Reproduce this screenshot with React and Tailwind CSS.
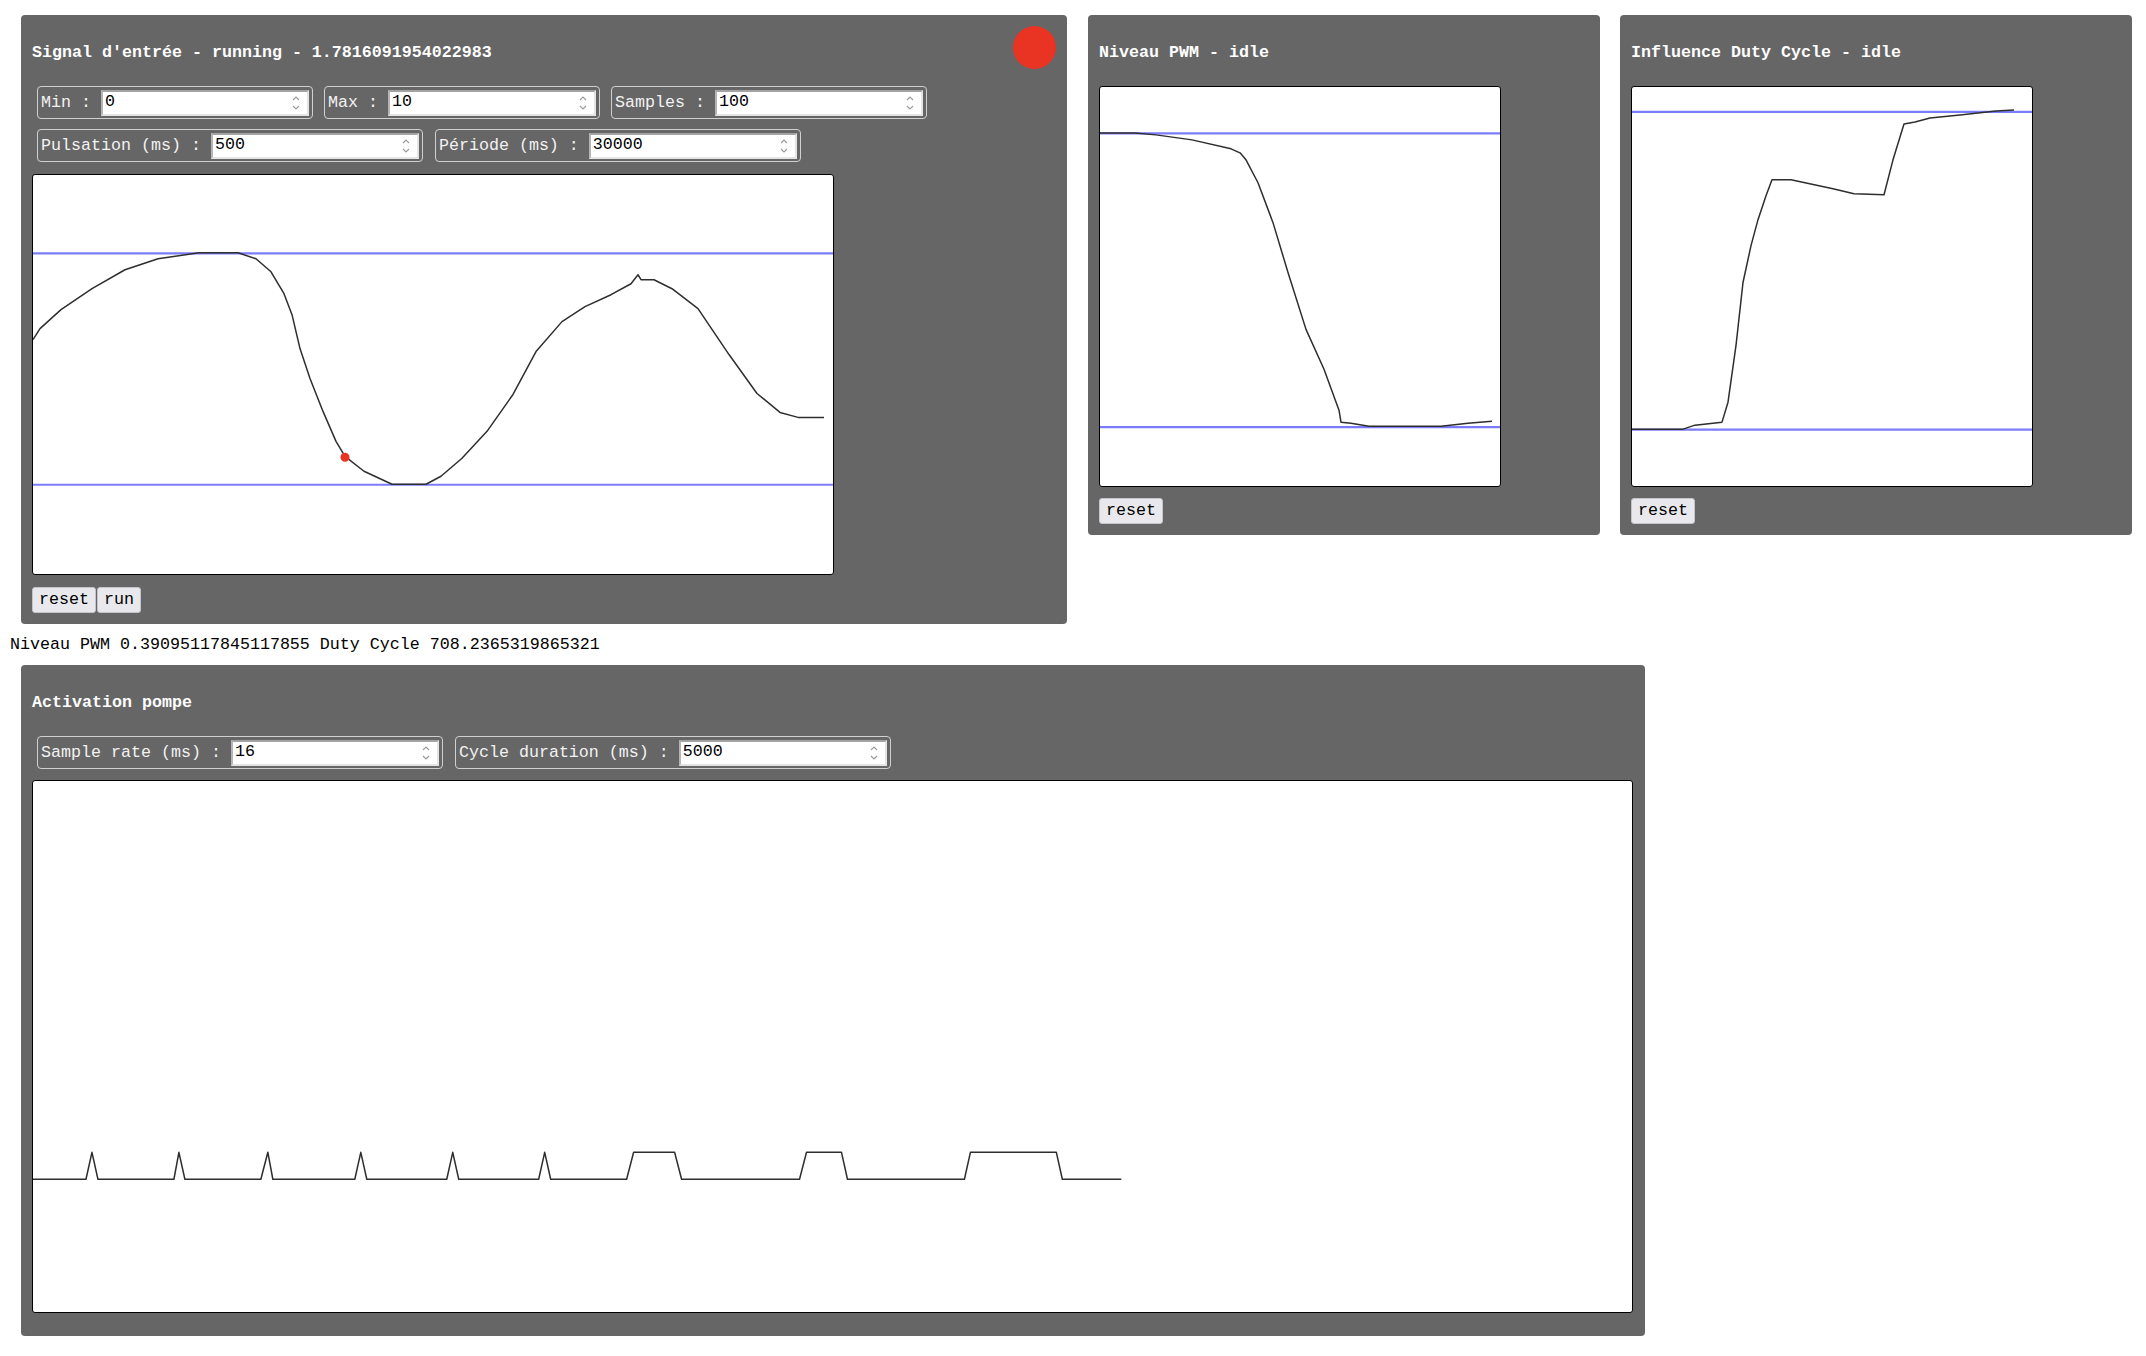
import React from 'react'

// points read off the reference canvases (interior pixel coords)
const signal = [
  [0, 165], [7, 154], [28, 135], [59, 114], [92, 95], [125, 84], [166, 78], [205, 78],
  [223, 84], [238, 97], [251, 119], [259, 140], [267, 174], [277, 204], [290, 237],
  [303, 267], [312, 282], [331, 297], [359, 310], [393, 310], [408, 302], [429, 284],
  [454, 257], [480, 220], [503, 177], [529, 147], [552, 132], [578, 120], [598, 109],
  [605, 100], [608, 105], [621, 105], [639, 114], [665, 134], [696, 180], [724, 219],
  [747, 238], [765, 243], [791, 243],
]

const pwm = [
  [0, 46], [35, 46], [56, 48], [92, 53], [131, 62], [140, 66], [146, 73], [158, 96],
  [173, 136], [188, 186], [206, 243], [224, 283], [239, 324], [241, 336], [251, 337],
  [269, 340], [341, 340], [368, 337], [392, 335],
]

const duty = [
  [0, 343], [51, 343], [63, 339], [90, 336], [96, 316], [104, 259], [111, 196],
  [119, 159], [126, 133], [134, 109], [140, 93], [159, 93], [201, 102], [222, 107],
  [252, 108], [261, 73], [272, 37], [283, 35], [298, 31], [328, 28], [364, 24], [382, 23],
]

const pulses = (() => {
  const base = 399
  const high = 372
  const pts = [[0, base]]
  const tri = [[53, 59, 65], [141, 146, 152], [228, 235, 240], [322, 328, 334], [414, 420, 426], [506, 512, 518]]
  tri.forEach(([a, p, b]) => { pts.push([a, base], [p, high], [b, base]) })
  const trap = [[594, 601, 642, 649], [767, 774, 809, 815], [932, 938, 1024, 1030]]
  trap.forEach(([a, b, c, d]) => { pts.push([a, base], [b, high], [c, high], [d, base]) })
  pts.push([1089, base])
  return pts
})()

const toPts = (arr) => arr.map(([x, y]) => `${x},${y}`).join(' ')

const Chart = ({ w, h, className, lines = [], data, dot }) => (
  <div className={`bg-white border border-black rounded-[3px] overflow-hidden ${className}`}>
    <svg viewBox={`0 0 ${w} ${h}`} preserveAspectRatio="none" className="block w-full h-full">
      {lines.map((y) => (
        <line key={y} x1="0" x2={w} y1={y} y2={y} stroke="#7c7cff" strokeWidth="2.2" />
      ))}
      <polyline points={toPts(data)} fill="none" stroke="#2e2e2e" strokeWidth="1.5" strokeLinejoin="round" />
      {dot && <circle cx={dot[0]} cy={dot[1]} r="4.5" fill="#e93424" />}
    </svg>
  </div>
)

const Spinner = () => (
  <svg width="10" height="18" viewBox="0 0 10 18" className="mr-[6px] shrink-0">
    <polyline points="2,6 5,3 8,6" fill="none" stroke="#9a9a9a" strokeWidth="1.1" />
    <polyline points="2,12 5,15 8,12" fill="none" stroke="#9a9a9a" strokeWidth="1.1" />
  </svg>
)

const Field = ({ label, value }) => (
  <label className="flex items-center h-[33px] border border-[#d0d0d0] rounded-[4px] pl-[3px] pr-[3px] text-[#f2f2f2]">
    <span className="whitespace-pre">{`${label} : `}</span>
    <div className="flex items-center w-[208px] h-[26px] bg-white border-2 border-t-[#a3a3a3] border-l-[#b5b5b5] border-r-[#e4e4e4] border-b-[#e4e4e4]">
      <span className="flex-1 pl-[2px] text-black leading-none">{value}</span>
      <Spinner />
    </div>
  </label>
)

const Btn = ({ children }) => (
  <button className="h-[26px] px-[6px] bg-[#e9e9ed] border border-[#c4c4ca] rounded-[3px] text-black leading-none">
    {children}
  </button>
)

const Panel = ({ title, circle, className = '', children }) => (
  <div className={`bg-[#666] rounded-[4px] p-[11px] ${className}`}>
    <div className="flex justify-between items-start h-[60px]">
      <span className="mt-[17px] leading-[20px] font-bold text-white whitespace-pre">{title}</span>
      {circle && <div className="w-[43px] h-[43px] rounded-full bg-[#e93424]" />}
    </div>
    {children}
  </div>
)

export default function App() {
  return (
    <div className="min-h-screen bg-white font-['Liberation_Mono',monospace] text-[16.67px] pt-[15px] pl-[10px]">
      <div className="flex items-start ml-[11px]">
        <Panel title="Signal d'entrée - running - 1.7816091954022983" circle className="w-[1046px]">
          <div className="flex gap-[11px] ml-[5px]">
            <Field label="Min" value="0" />
            <Field label="Max" value="10" />
            <Field label="Samples" value="100" />
          </div>
          <div className="flex gap-[12px] ml-[5px] mt-[10px]">
            <Field label="Pulsation (ms)" value="500" />
            <Field label="Période (ms)" value="30000" />
          </div>
          <Chart w={800} h={400} className="w-[802px] h-[401px] mt-[12px]" lines={[78.5, 310.5]} data={signal} dot={[312, 283]} />
          <div className="flex gap-[1px] mt-[12px]">
            <Btn>reset</Btn>
            <Btn>run</Btn>
          </div>
        </Panel>

        <Panel title="Niveau PWM - idle" className="w-[512px] ml-[21px]">
          <Chart w={400} h={400} className="w-[402px] h-[401px]" lines={[46.5, 341]} data={pwm} />
          <div className="flex mt-[11px]">
            <Btn>reset</Btn>
          </div>
        </Panel>

        <Panel title="Influence Duty Cycle - idle" className="w-[512px] ml-[20px]">
          <Chart w={400} h={400} className="w-[402px] h-[401px]" lines={[25, 343.5]} data={duty} />
          <div className="flex mt-[11px]">
            <Btn>reset</Btn>
          </div>
        </Panel>
      </div>

      <div className="mt-[11px] leading-[20px] text-black whitespace-pre">
        Niveau PWM 0.39095117845117855 Duty Cycle 708.2365319865321
      </div>

      <div className="mt-[10px] ml-[11px]">
        <Panel title="Activation pompe" className="w-[1624px] pb-[23px]">
          <div className="flex gap-[12px] ml-[5px]">
            <Field label="Sample rate (ms)" value="16" />
            <Field label="Cycle duration (ms)" value="5000" />
          </div>
          <Chart w={1600} h={532} className="w-[1601px] h-[533px] mt-[11px]" data={pulses} />
        </Panel>
      </div>
    </div>
  )
}
